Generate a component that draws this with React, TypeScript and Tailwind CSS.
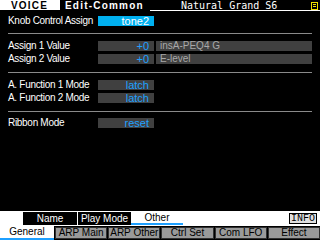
import React from "react";

const Row = ({ label, v1, v2, v1Sel }: { label: string; v1: string; v2?: string; v1Sel?: boolean }) => (
  <div className="flex h-[10px] items-center">
    <div className="w-[98px] pl-[8px] text-[10px] leading-[10px] tracking-[-0.3px] text-white whitespace-nowrap">{label}</div>
    <div
      className={`w-[56px] h-[10px] flex items-center justify-end pr-[5px] text-[11px] leading-[10px] ${
        v1Sel ? "bg-[#00b0f0] text-white" : "bg-[#404040] text-[#1ea0ff]"
      }`}
    >
      {v1}
    </div>
    {v2 !== undefined && (
      <div className="ml-[2px] w-[156px] h-[10px] flex items-center pl-[4px] text-[10px] leading-[10px] bg-[#404040] text-[#a8a8a8]">
        {v2}
      </div>
    )}
  </div>
);

const Sep = ({ mt }: { mt: string }) => <div className={`${mt} mx-[8px] h-px bg-[#8a8a8a]`} />;

export default function App() {
  const tabs = ["ARP Main", "ARP Other", "Ctrl Set", "Com LFO", "Effect"];
  return (
    <div
      className="w-[320px] h-[240px] bg-black overflow-hidden flex flex-col"
      style={{ fontFamily: '"Liberation Sans", Arial, sans-serif' }}
    >
      {/* header */}
      <div className="h-[10px] flex items-start">
        <div className="w-[60px] h-[10px] bg-white text-black font-bold text-[10px] leading-[11px] tracking-[1.2px] pl-[11px]">VOICE</div>
        <div className="ml-[5px] w-[78px] text-white font-bold text-[10px] leading-[11px] tracking-[1.2px] whitespace-nowrap">Edit-Common</div>
        <div
          className="ml-[38px] text-white text-[10px] leading-[11px]"
          style={{ fontFamily: '"DejaVu Sans Mono", monospace' }}
        >
          Natural Grand S6
        </div>
        <div className="flex-1" />
        <svg width="7" height="8" viewBox="0 0 7 8" className="mr-[2px] mt-[2px]">
          <rect x="0.5" y="0.5" width="6" height="7" fill="none" stroke="#f0e000" />
          <line x1="2" y1="2.5" x2="5" y2="2.5" stroke="#f0e000" />
          <line x1="2" y1="4.5" x2="5" y2="4.5" stroke="#f0e000" />
        </svg>
      </div>
      <div className="ml-[150px] h-px bg-white" />

      {/* content */}
      <div className="mt-[5px]">
        <Row label="Knob Control Assign" v1="tone2" v1Sel />
      </div>
      <Sep mt="mt-[7px]" />
      <div className="mt-[7px]">
        <Row label="Assign 1 Value" v1="+0" v2="insA-PEQ4 G" />
      </div>
      <div className="mt-[3px]">
        <Row label="Assign 2 Value" v1="+0" v2="E-level" />
      </div>
      <Sep mt="mt-[8px]" />
      <div className="mt-[7px]">
        <Row label="A. Function 1 Mode" v1="latch" />
      </div>
      <div className="mt-[3px]">
        <Row label="A. Function 2 Mode" v1="latch" />
      </div>
      <Sep mt="mt-[8px]" />
      <div className="mt-[6px]">
        <Row label="Ribbon Mode" v1="reset" />
      </div>

      <div className="flex-1" />

      {/* sub tabs strip */}
      <div className="h-[15px] bg-white flex items-stretch py-[1px] text-[10px] leading-[10px]">
        <div className="w-[23px]" />
        <div className="w-[54px] bg-black text-white flex items-center justify-center">Name</div>
        <div className="w-[53px] ml-[1px] bg-black text-white flex items-center justify-center">Play Mode</div>
        <div className="w-[52px] flex items-center justify-center text-black border-b-2 border-[#1ea0ff]">Other</div>
        <div className="flex-1" />
        <div
          className="w-[28px] mr-[3px] my-[1px] bg-[#e0e0e0] border border-black text-black flex items-center justify-center text-[10px]"
          style={{ fontFamily: '"Liberation Mono", monospace' }}
        >
          INFO
        </div>
      </div>

      {/* main tabs */}
      <div className="h-[14px] flex bg-black text-[10px] leading-[10px]">
        <div className="w-[54px] bg-white text-black flex items-center justify-center border-b-2 border-[#1ea0ff]">General</div>
        {tabs.map((t) => (
          <div
            key={t}
            className="flex-1 ml-[1px] mt-[1px] mb-[1px] bg-[#9a9a9a] text-black flex items-center justify-center border border-[#303030] whitespace-nowrap"
          >
            {t}
          </div>
        ))}
      </div>
    </div>
  );
}
